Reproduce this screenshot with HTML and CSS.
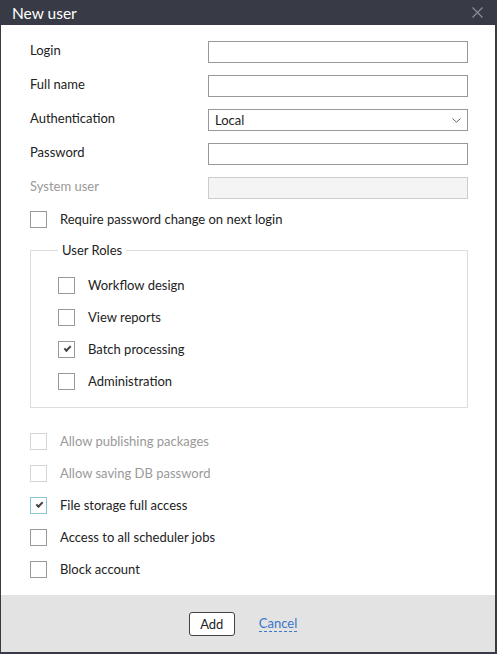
FILE: index.html
```html
<!DOCTYPE html>
<html lang="en">
<head>
    <meta charset="UTF-8">
    <meta name="viewport" content="width=device-width, initial-scale=1.0">
    <title>New user</title>
    <link rel="stylesheet" href="styles.css">
</head>
<body>
    <div class="dialog">
        <div class="dialog-title">
            <span>New user</span>
            <button class="close-btn" aria-label="Close">
                <svg width="11" height="11" viewBox="0 0 11 11"><path d="M0.5 0.5 L10.5 10.5 M10.5 0.5 L0.5 10.5" stroke="#8a8d96" stroke-width="1.2"/></svg>
            </button>
        </div>

        <div class="dialog-body">
            <div class="form-grid">
                <label>Login</label>
                <input type="text" class="field">
                <label>Full name</label>
                <input type="text" class="field">
                <label>Authentication</label>
                <div class="field select">
                    <span>Local</span>
                    <svg width="9" height="5" viewBox="0 0 9 5"><path d="M0.5 0.5 L4.5 4.2 L8.5 0.5" fill="none" stroke="#666" stroke-width="1"/></svg>
                </div>
                <label>Password</label>
                <input type="password" class="field">
                <label class="disabled">System user</label>
                <input type="text" class="field" disabled>
            </div>

            <div class="check-row">
                <span class="box"></span>
                <span>Require password change on next login</span>
            </div>

            <fieldset class="roles">
                <legend>User Roles</legend>
                <div class="check-row">
                    <span class="box"></span>
                    <span>Workflow design</span>
                </div>
                <div class="check-row">
                    <span class="box"></span>
                    <span>View reports</span>
                </div>
                <div class="check-row">
                    <span class="box checked"></span>
                    <span>Batch processing</span>
                </div>
                <div class="check-row">
                    <span class="box"></span>
                    <span>Administration</span>
                </div>
            </fieldset>

            <div class="options">
                <div class="check-row disabled">
                    <span class="box"></span>
                    <span>Allow publishing packages</span>
                </div>
                <div class="check-row disabled">
                    <span class="box"></span>
                    <span>Allow saving DB password</span>
                </div>
                <div class="check-row">
                    <span class="box checked focus"></span>
                    <span>File storage full access</span>
                </div>
                <div class="check-row">
                    <span class="box"></span>
                    <span>Access to all scheduler jobs</span>
                </div>
                <div class="check-row">
                    <span class="box"></span>
                    <span>Block account</span>
                </div>
            </div>
        </div>

        <div class="dialog-footer">
            <button class="btn-add">Add</button>
            <a href="#" class="link-cancel">Cancel</a>
        </div>
    </div>
</body>
</html>
```

FILE: styles.css
```css
body {
    margin: 0;
    font-family: Lato, "Open Sans", sans-serif;
    font-size: 13px;
    color: #222;
    background-color: #fff;
}

.dialog {
    width: 497px;
    height: 654px;
    box-sizing: border-box;
    border: 2px solid #383b45;
    border-top: none;
    border-left-width: 1px;
    display: flex;
    flex-direction: column;
    background-color: #fff;
}

.dialog-title {
    height: 25px;
    background-color: #383b45;
    color: #fff;
    display: flex;
    align-items: center;
    justify-content: space-between;
    padding: 0 14px 0 12px;
    font-size: 15.5px;
    margin: 0 -2px 0 -1px;
}

.close-btn {
    border: none;
    background: transparent;
    padding: 0;
    display: flex;
    cursor: pointer;
}

.dialog-body {
    flex: 1;
    padding: 16px 27px 0 29px;
}

.form-grid {
    display: grid;
    grid-template-columns: 178px 260px;
    row-gap: 12px;
    align-items: start;
}

.form-grid label {
    line-height: 18px;
}

.form-grid label.disabled {
    color: #999;
}

.field {
    box-sizing: border-box;
    height: 22px;
    width: 260px;
    margin: 0;
    border: 1px solid #999;
    background-color: #fff;
    font: inherit;
    padding: 0 6px;
}

.field:disabled {
    background-color: #f4f4f4;
    border-color: #ccc;
}

.select {
    display: flex;
    align-items: center;
    justify-content: space-between;
    padding: 0 6px 0 6px;
    line-height: 20px;
}

.check-row {
    display: flex;
    align-items: center;
    gap: 13px;
    height: 32px;
}

.check-row.disabled {
    color: #999;
}

.box {
    box-sizing: border-box;
    width: 17px;
    height: 17px;
    border: 1px solid #999;
    background-color: #fff;
    position: relative;
    flex-shrink: 0;
}

.check-row.disabled .box {
    border-color: #d4d4d4;
}

.box.focus {
    border-color: #8ec5d6;
}

.box.checked::after {
    content: "";
    position: absolute;
    left: 5px;
    top: 4px;
    width: 5px;
    height: 2px;
    border-left: 2px solid #444;
    border-bottom: 2px solid #444;
    transform: rotate(-45deg);
}

.form-grid + .check-row {
    margin-top: 4px;
}

.roles {
    margin: 7px 0 0 0;
    padding: 11px 12px 10px 27px;
    border: 1px solid #ddd;
}

.roles legend {
    padding: 0 4px;
    margin-left: 0;
}

.options {
    margin-top: 17px;
}

.dialog-footer {
    height: 57px;
    background-color: #e3e3e3;
    display: flex;
    align-items: center;
    justify-content: center;
    gap: 24px;
    padding-right: 10px;
}

.btn-add {
    width: 46px;
    height: 24px;
    border: 1px solid #444;
    border-radius: 3px;
    background-color: #fff;
    font: inherit;
    color: #222;
    padding: 0;
}

.link-cancel {
    color: #3a76c9;
    text-decoration: none;
    border-bottom: 1px dashed #3a76c9;
    line-height: 16px;
}
```
